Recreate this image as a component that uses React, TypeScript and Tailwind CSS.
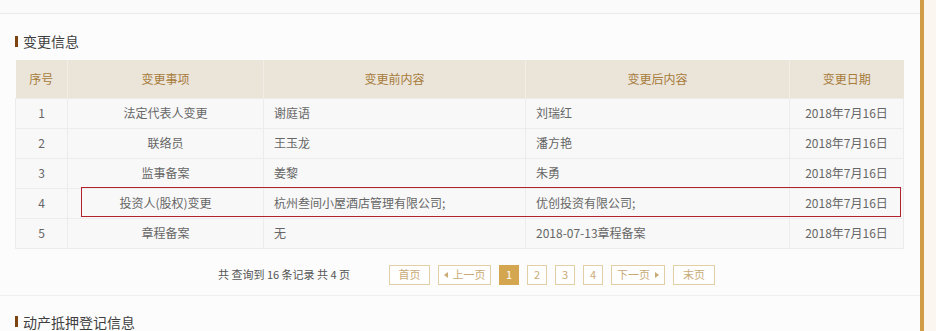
const rows = [
  { no: "1", item: "法定代表人变更", before: "谢庭语", after: "刘瑞红", date: "2018年7月16日" },
  { no: "2", item: "联络员", before: "王玉龙", after: "潘方艳", date: "2018年7月16日" },
  { no: "3", item: "监事备案", before: "姜黎", after: "朱勇", date: "2018年7月16日" },
  { no: "4", item: "投资人(股权)变更", before: "杭州叁间小屋酒店管理有限公司;", after: "优创投资有限公司;", date: "2018年7月16日" },
  { no: "5", item: "章程备案", before: "无", after: "2018-07-13章程备案", date: "2018年7月16日" },
];

function SectionTitle({ title }: { title: string }) {
  return (
    <div className="flex items-center h-[16px] gap-[5px]">
      <span className="block w-[3px] h-[11px] bg-[#7d4412]" />
      <span className="text-[14px] leading-[16px] text-[#3f3f3f]">{title}</span>
    </div>
  );
}

function PageBtn({ children, active, w }: { children: React.ReactNode; active?: boolean; w: string }) {
  return (
    <span
      className={
        (active
          ? "bg-[#d4a650] border-[#d4a650] text-white "
          : "bg-white border-[#e3cfa6] text-[#c9ab76] ") +
        w +
        " h-[20px] flex items-center justify-center border text-[11px] leading-none whitespace-nowrap"
      }
    >
      {children}
    </span>
  );
}

function Arrow({ dir }: { dir: "l" | "r" }) {
  return (
    <svg width="4" height="6" viewBox="0 0 4 6" className={dir === "l" ? "mr-[5px]" : "ml-[5px]"}>
      <path d={dir === "l" ? "M4 0 L0 3 L4 6 Z" : "M0 0 L4 3 L0 6 Z"} fill="#c9ab76" />
    </svg>
  );
}

export default function App() {
  return (
    <div
      className="w-[936px] h-[331px] flex overflow-hidden bg-[#fbf7f0]"
      style={{ fontFamily: '"Noto Sans CJK SC", "Noto Sans", sans-serif' }}
    >
      <div className="w-[924px] shrink-0 bg-[#fcfcfc] border-r-4 border-[#d19e47] flex flex-col">
        <div className="h-[14px] shrink-0 bg-[#fafafa] border-b border-[#ebebeb]" />
        <div className="px-[15px] pt-[19px] pb-[10px] border-b border-[#efefef]">
          <SectionTitle title="变更信息" />
          <div className="relative mt-[11px] w-[888px]">
            <table className="w-[888px] table-fixed border-collapse text-[12px]">
              <colgroup>
                <col className="w-[52px]" />
                <col className="w-[196px]" />
                <col className="w-[262px]" />
                <col className="w-[264px]" />
                <col className="w-[114px]" />
              </colgroup>
              <thead>
                <tr className="h-[38px] bg-[#ebe4d9] text-[#a67b3a]">
                  <th className="font-normal border-r border-[#f2ede5]">序号</th>
                  <th className="font-normal border-r border-[#f2ede5]">变更事项</th>
                  <th className="font-normal border-r border-[#f2ede5]">变更前内容</th>
                  <th className="font-normal border-r border-[#f2ede5]">变更后内容</th>
                  <th className="font-normal">变更日期</th>
                </tr>
              </thead>
              <tbody className="text-[#666666]">
                {rows.map((r) => (
                  <tr key={r.no} className="h-[30px] bg-[#f8f8f8] border border-[#ececec]">
                    <td className="text-center border-r border-[#ececec]">{r.no}</td>
                    <td className="text-center border-r border-[#ececec]">{r.item}</td>
                    <td className="pl-[10px] border-r border-[#ececec]">{r.before}</td>
                    <td className="pl-[10px] border-r border-[#ececec]">{r.after}</td>
                    <td className="text-center">{r.date}</td>
                  </tr>
                ))}
              </tbody>
            </table>
            <div className="absolute left-[66px] top-[127px] w-[820px] h-[30px] border border-[#b3222c] pointer-events-none" />
          </div>
          <div className="mt-[16px] h-[20px] flex items-center ml-[203px]">
            <span className="text-[11px] leading-none text-[#555555] whitespace-nowrap w-[171px]">
              共 查询到 16 条记录 共 4 页
            </span>
            <div className="flex items-center gap-[8px]">
              <PageBtn w="w-[41px]">首页</PageBtn>
              <PageBtn w="w-[53px]">
                <Arrow dir="l" />
                上一页
              </PageBtn>
              <PageBtn w="w-[20px]" active>
                1
              </PageBtn>
              <PageBtn w="w-[20px]">2</PageBtn>
              <PageBtn w="w-[20px]">3</PageBtn>
              <PageBtn w="w-[20px]">4</PageBtn>
              <PageBtn w="w-[54px]">
                下一页
                <Arrow dir="r" />
              </PageBtn>
              <PageBtn w="w-[42px]">末页</PageBtn>
            </div>
          </div>
        </div>
        <div className="px-[15px] pt-[18px]">
          <SectionTitle title="动产抵押登记信息" />
        </div>
      </div>
    </div>
  );
}
